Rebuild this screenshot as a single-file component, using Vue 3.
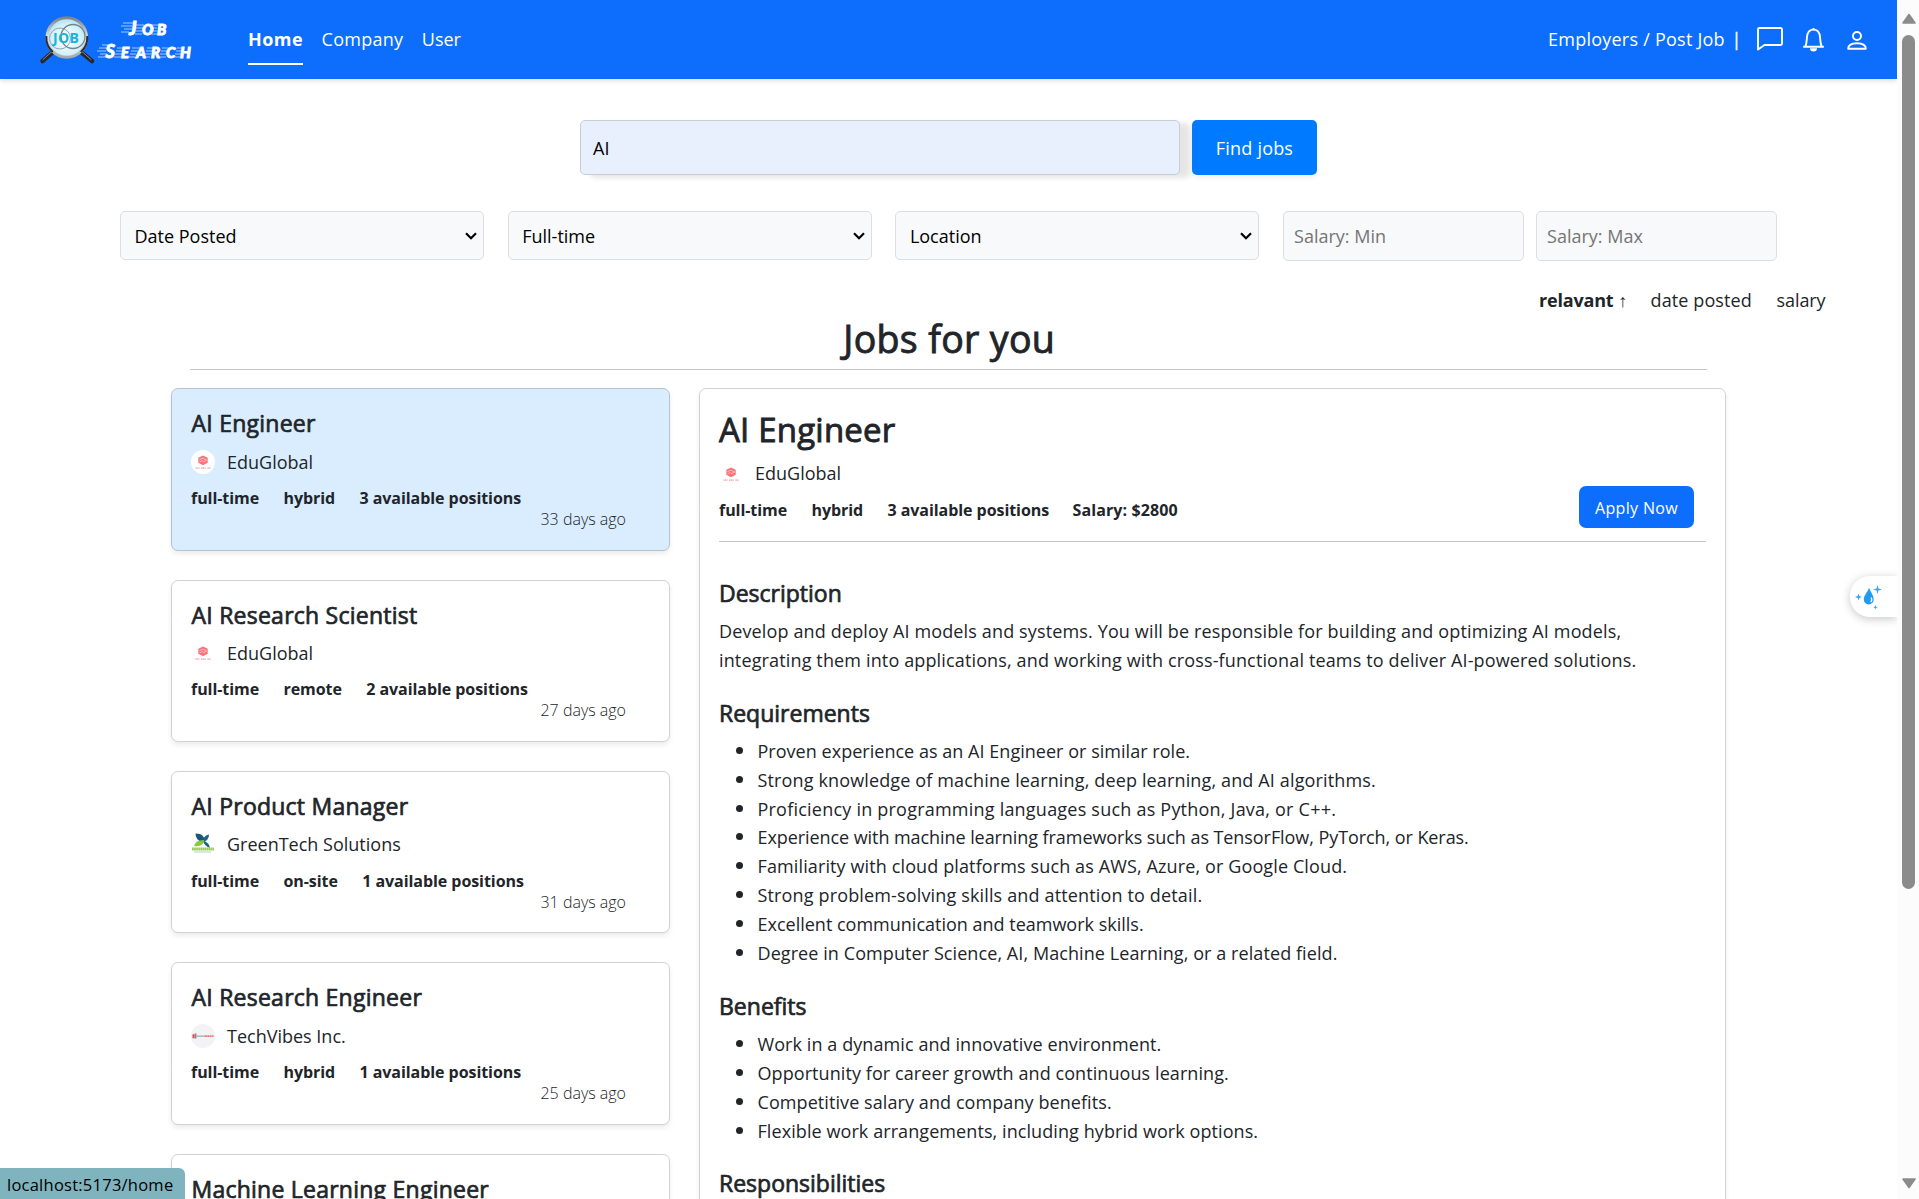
<script setup>
const jobs = [
  { title: 'AI Engineer', company: 'EduGlobal', logo: 'edu', mode: 'hybrid', open: 3, days: 33, active: true },
  { title: 'AI Research Scientist', company: 'EduGlobal', logo: 'edu', mode: 'remote', open: 2, days: 27 },
  { title: 'AI Product Manager', company: 'GreenTech Solutions', logo: 'green', mode: 'on-site', open: 1, days: 31 },
  { title: 'AI Research Engineer', company: 'TechVibes Inc.', logo: 'vibes', mode: 'hybrid', open: 1, days: 25 },
  { title: 'Machine Learning Engineer' },
]
const filters = ['Date Posted', 'Full-time', 'Location']
const requirements = [
  'Proven experience as an AI Engineer or similar role.',
  'Strong knowledge of machine learning, deep learning, and AI algorithms.',
  'Proficiency in programming languages such as Python, Java, or C++.',
  'Experience with machine learning frameworks such as TensorFlow, PyTorch, or Keras.',
  'Familiarity with cloud platforms such as AWS, Azure, or Google Cloud.',
  'Strong problem-solving skills and attention to detail.',
  'Excellent communication and teamwork skills.',
  'Degree in Computer Science, AI, Machine Learning, or a related field.',
]
const benefits = [
  'Work in a dynamic and innovative environment.',
  'Opportunity for career growth and continuous learning.',
  'Competitive salary and company benefits.',
  'Flexible work arrangements, including hybrid work options.',
]
</script>

<template>
  <div class="window">
    <div class="page">
      <header class="navbar">
        <svg class="brand" width="156" height="52" viewBox="38 14 156 52">
          <defs>
            <radialGradient id="glass" cx="50%" cy="55%" r="55%">
              <stop offset="0" stop-color="#ffffff" />
              <stop offset=".7" stop-color="#d3f1fa" />
              <stop offset="1" stop-color="#a9dcef" />
            </radialGradient>
            <linearGradient id="rim" x1="0" y1="0" x2="0" y2="1">
              <stop offset="0" stop-color="#7d8388" />
              <stop offset=".5" stop-color="#dfe3e5" />
              <stop offset="1" stop-color="#a5aaae" />
            </linearGradient>
          </defs>
          <g stroke-linecap="round">
            <path d="M53 52 42.500 61" stroke="#26282c" stroke-width="4.500" />
            <path d="M81 52 92 61" stroke="#26282c" stroke-width="4.500" />
            <path d="M52 51.500 43 59.500" stroke="#85898e" stroke-width="1" />
            <path d="M82 51.500 91 59.500" stroke="#85898e" stroke-width="1" />
          </g>
          <circle cx="66.800" cy="37.500" r="19.800" fill="url(#glass)" stroke="url(#rim)" stroke-width="3" />
          <circle cx="60" cy="38.500" r="10.500" fill="none" stroke="#8fa9b3" stroke-width="1" />
          <circle cx="73" cy="36.500" r="12" fill="none" stroke="#70868f" stroke-width="1.300" />
          <path d="M46.300 36q-.5 10 6.500 16M87.300 36q.5 10-6.500 16" fill="none" stroke="#2b2d31" stroke-width="2" />
          <text class="glass-word" x="53" y="43" textLength="26">JOB</text>
          <g stroke="#ffffff" stroke-width=".9" opacity=".7">
            <path d="M123 23h10M121 26h11M124 29h8M121 32h8M136 25h8M135 28h8M136 31h6M135 34h7M151 25h8M150 28h7M149 31h8M150 34h7" />
            <path d="M102 45h8M99 48h10M97 51h9M100 54h7M98 57h8M117 48h7M116 51h7M115 54h7M114 57h7M132 48h8M131 51h7M130 54h6M129 57h6M147 48h7M146 51h7M145 54h6M144 57h6M162 48h7M161 51h6M160 54h6M159 57h7M177 48h7M176 51h6M175 54h6M174 57h6" />
          </g>
          <text class="speed big" x="129" y="34.800">J</text>
          <text class="speed" x="142 157" y="34.800">OB</text>
          <text class="speed big" x="105.500" y="57.500">S</text>
          <text class="speed" x="121 136 151 166 180" y="57.500">EARCH</text>
        </svg>
        <nav class="links">
          <a class="current">Home</a>
          <a class="l-company">Company</a>
          <a class="l-user">User</a>
        </nav>
        <div class="account">
          <span class="employers">Employers / Post Job</span>
          <span class="bar">|</span>
          <svg class="i-chat" width="26" height="24" viewBox="0 0 26 24"><path d="M2.500 1h21a1.500 1.500 0 0 1 1.500 1.500v14a1.500 1.500 0 0 1-1.500 1.500H7.500L1 22.500V2.500A1.500 1.500 0 0 1 2.500 1z" fill="none" stroke="#fff" stroke-width="1.900" stroke-linejoin="round" /></svg>
          <svg class="i-bell" width="23" height="25" viewBox="0 0 23 25"><path d="M1.200 19.700h20.600M3.300 19.500C5 16.500 4.600 9.500 5.500 7.200 6.500 4 8.500 2.600 11.500 2.600s5 1.400 6 4.600c.9 2.300.5 9.300 2.200 12.300" fill="none" stroke="#fff" stroke-width="1.900" stroke-linejoin="round" /><path d="M10 2.500a1.500 1.500 0 0 1 3 0z M8 21.200h7a3.500 3.200 0 0 1-7 0z" fill="#fff" /></svg>
          <svg class="i-user" width="20" height="19" viewBox="0 0 20 19"><circle cx="10" cy="5" r="4" fill="none" stroke="#fff" stroke-width="1.900" /><path d="M1.200 17.800c0-3.500 3.500-5.600 8.800-5.600s8.800 2.100 8.800 5.600z" fill="none" stroke="#fff" stroke-width="1.900" stroke-linejoin="round" /></svg>
        </div>
      </header>

      <form class="search">
        <div class="query">AI</div>
        <div class="find"><span>Find jobs</span></div>
      </form>

      <div class="filters">
        <div v-for="f in filters" :key="f" class="select">
          <span>{{ f }}</span>
          <svg width="12" height="8" viewBox="0 0 12 8"><path d="M1 1.200 6 6.200 11 1.200" fill="none" stroke="#000" stroke-width="2.200" /></svg>
        </div>
        <div class="salary"><span>Salary: Min</span></div>
        <div class="salary second"><span>Salary: Max</span></div>
      </div>

      <div class="sort">
        <span class="s1"><b>relavant</b> <i>↑</i></span>
        <span class="s2">date posted</span>
        <span class="s3">salary</span>
      </div>

      <h1><span>Jobs for you</span></h1>

      <main class="columns">
        <section class="list">
          <article v-for="job in jobs" :key="job.title" class="card" :class="{ active: job.active }">
            <h5>{{ job.title }}</h5>
            <template v-if="job.company">
              <div class="company">
                <svg v-if="job.logo === 'edu'" class="avatar" viewBox="0 0 24 24"><circle cx="12" cy="12" r="12" fill="#fff" /><path d="m12 5.500 4.700 2.300v5L12 15.200l-4.700-2.400v-5z" fill="#f9747a" /><path d="m8.500 9.500 3.500-1.300 3.500 1.700M8.500 11.800l3-1.200 1 1 3-1.400" fill="none" stroke="#fff" stroke-width=".5" /><path d="M4.500 18.200h4M10 18.200h5M16.500 18.200h3" stroke="#fbb6b8" stroke-width="1.800" stroke-dasharray="1.300 .4" /></svg>
                <svg v-else-if="job.logo === 'green'" class="avatar" viewBox="0 0 24 24"><path d="M4.500.5c6.500 0 9.500 3.500 9 8-5.500.5-8.500-2-9-8z" fill="#17587a" /><path d="M11.500 8.500q1-6 6.500-7 0 6.500-6.500 7zM12 7.500q6.500 2 7 7.500-6-2-7-7.500z" fill="#1d6584" /><path d="M3 13q1.500-6 10-6 0 7-10 6z" fill="#8ac63f" /><path d="M1 16h22" stroke="#9bcb58" stroke-width="3" stroke-dasharray="1.800 .3" /><path d="M3 19h17" stroke="#b9cdd4" stroke-width="1" /></svg>
                <svg v-else class="avatar" viewBox="0 0 24 24"><circle cx="12" cy="12" r="12" fill="#f3f2f4" /><path d="M1.500 10.300h2v4h-2z" fill="#ee4048" /><path d="M3.500 9.500h2v5h-2z" fill="#8a8a8c" /><path d="M6 12.200h8" stroke="#b7b7ba" stroke-width="1.600" /><path d="M14 12.200h8.500" stroke="#f0777c" stroke-width="1.700" stroke-dasharray="2 .3" /></svg>
                <span>{{ job.company }}</span>
              </div>
              <div class="tags"><span>full-time</span><span>{{ job.mode }}</span><span>{{ job.open }} available positions</span></div>
              <div class="age">{{ job.days }} days ago</div>
            </template>
          </article>
        </section>

        <section class="detail">
          <div class="head">
            <div>
              <h3><span>AI Engineer</span></h3>
              <div class="company">
                <svg class="avatar" viewBox="0 0 24 24"><path d="m12 5.500 4.700 2.300v5L12 15.200l-4.700-2.400v-5z" fill="#f9747a" /><path d="m8.500 9.500 3.500-1.300 3.500 1.700M8.500 11.800l3-1.200 1 1 3-1.400" fill="none" stroke="#fff" stroke-width=".5" /><path d="M4.500 18.200h4M10 18.200h5M16.500 18.200h3" stroke="#fbb6b8" stroke-width="1.800" stroke-dasharray="1.300 .4" /></svg>
                <span>EduGlobal</span>
              </div>
              <div class="tags"><span>full-time</span><span>hybrid</span><span>3 available positions</span><span class="pay">Salary: $2800</span></div>
            </div>
            <div class="apply"><span>Apply Now</span></div>
          </div>
          <h5 class="first">Description</h5>
          <p><span>Develop and deploy AI models and systems. You will be responsible for building and optimizing AI models,</span><br><span>integrating them into applications, and working with cross-functional teams to deliver AI-powered solutions.</span></p>
          <h5>Requirements</h5>
          <ul class="requirements"><li v-for="r in requirements" :key="r"><span>{{ r }}</span></li></ul>
          <h5>Benefits</h5>
          <ul class="benefits"><li v-for="b in benefits" :key="b"><span>{{ b }}</span></li></ul>
          <h5>Responsibilities</h5>
        </section>
      </main>

      <div class="widget">
        <svg width="34" height="30" viewBox="0 0 34 30"><path d="M14 6.500c1 4 4.700 7.500 4.700 12a4.900 4.900 0 0 1-9.900 0C8.800 14 13 11 14 6.500z" fill="#1f9cf0" /><path d="M16.200 16.500q1.300 3-.5 4.500" stroke="#fff" stroke-width="1.300" fill="none" /><path d="m22.500 4 1 3.500L27 8.500l-3.500 1-1 3.500-1-3.500-3.500-1 3.500-1zM3.500 12.500l.9 2.600 2.600.9-2.600.9-.9 2.600-.9-2.600L0 16l2.600-.9zM20.500 24l.6 1.700 1.700.6-1.700.6-.6 1.700-.6-1.700-1.700-.6 1.700-.6z" fill="#3aa8ee" /></svg>
      </div>
      <div class="status"><span>localhost:5173/home</span></div>
    </div>
    <div class="scrollbar">
      <svg width="14" height="11" viewBox="0 0 14 11"><path d="M7 1.500 13 10H1z" fill="#8b8b8b" stroke="#8b8b8b" stroke-width="1.600" stroke-linejoin="round" /></svg>
      <div class="thumb"></div>
      <svg class="down" width="14" height="11" viewBox="0 0 14 11"><path d="M7 9.500 13 1H1z" fill="#8b8b8b" stroke="#8b8b8b" stroke-width="1.600" stroke-linejoin="round" /></svg>
    </div>
  </div>
</template>

<style>
html, body { margin: 0; overflow: hidden; background: #fff; }
</style>

<style scoped>
* { box-sizing: border-box; }
.window {
  display: flex;
  width: 1919px;
  height: 1199px;
  overflow: hidden;
  font-family: "Open Sans", "Noto Sans", sans-serif;
  font-size: 18px;
  line-height: 28.8px;
  color: #212529;
  white-space: nowrap;
}
.page { position: relative; width: 1897px; height: 1199px; overflow: hidden; }
.navbar { display: flex; height: 79px; background: #0d6efd; color: #fff; box-shadow: 0 2px 5px rgba(0, 0, 0, .12); }
.brand { margin: 14px 0 0 38px; flex: none; }
.glass-word { font: bold 14px "Open Sans", sans-serif; fill: #18b4d8; }
.speed { font: italic 900 15px Lato, sans-serif; fill: #fff; stroke: #fff; stroke-width: .9px; }
.speed.big { font-size: 18px; }
.links { display: flex; gap: 18.500px; margin: 25px 0 0 54px; height: 40px; }
.links a { height: 40px; }
.links .current { font-weight: 700; letter-spacing: .45px; border-bottom: 2px solid #fff; }
.l-company { letter-spacing: .26px; }
.account { display: flex; margin-left: auto; padding-top: 25px; width: 349px; }
.employers { letter-spacing: .24px; }
.bar { margin-left: 6.500px; -webkit-text-stroke: .3px #fff; }
.account svg { flex: none; }
.i-chat { margin: 2px 0 0 15.500px; }
.i-bell { margin: 2px 0 0 19px; }
.i-user { margin: 5.500px 0 0 22px; }
.search { display: flex; justify-content: center; gap: 12px; padding-top: 41px; }
.query {
  width: 600px;
  height: 55px;
  padding: 13px 12px;
  background: #e8f0fe;
  border: 1px solid #c9ccd0;
  border-radius: 5px;
  box-shadow: 10px 3px 5px rgba(0, 0, 0, .1);
  color: #000;
}
.find { width: 125px; height: 55px; padding: 14px 0; border-radius: 5px; background: #007bff; color: #fff; text-align: center; letter-spacing: .2px; box-shadow: 0 3px 5px rgba(0, 0, 0, .06); z-index: 1; }
.filters { display: flex; padding: 36px 0 0 120px; height: 86px; }
.select, .salary { border: 1px solid #dcdee1; border-radius: 5px; background: #f8f9fa; }
.select { display: flex; justify-content: space-between; width: 364px; height: 49px; margin-right: 23.700px; padding: 10px 6px 0 13.500px; color: #000; }
.select svg { margin-top: 10px; }
.salary { width: 241px; height: 50px; padding: 10px; color: #757575; }
.second { margin-left: 12px; }
.sort { display: flex; justify-content: flex-end; height: 29px; margin-top: 25px; padding: 0 71.500px 0 0; }
.sort b { letter-spacing: -.2px; }
.sort i { font-style: normal; font-family: "Liberation Sans", sans-serif; font-size: 18px; line-height: 1; }
.s1 { width: 111.500px; }
.s2 { width: 126px; letter-spacing: .1px; }
.s3 { letter-spacing: -.1px; }
h1, h3, h5, p, ul { margin: 0; }
h1 { width: 1517px; height: 53px; margin: 2px 0 0 190px; padding-left: 1.500px; border-bottom: 1px solid #c4c6c8; font-size: 37.500px; letter-spacing: .35px; font-weight: 400; -webkit-text-stroke: .9px #212529; line-height: 43px; text-align: center; }
.columns { display: flex; gap: 29px; padding: 18.400px 0 0 171px; }
.list { display: flex; flex-direction: column; gap: 28.800px; width: 499px; }
.card { flex: none; height: 162.500px; padding: 20px 19px; border: 1px solid #d0d2d4; border-radius: 7px; background: #fff; box-shadow: 0 3px 5px rgba(0, 0, 0, .08); }
.active { background: #d9edff; border-color: #b3c4d3; }
h5 { font-size: 23px; font-weight: 400; -webkit-text-stroke: .7px #212529; line-height: 29px; }
.card h5 { letter-spacing: .24px; padding-left: .5px; }
.company { display: flex; gap: 12px; align-items: center; font-size: 18px; }
.avatar { width: 24px; height: 24px; flex: none; }
.card .company { height: 29px; margin-top: 9.200px; }
.tags { display: flex; gap: 24.400px; font-weight: 700; font-size: 16px; line-height: 26px; letter-spacing: -.06px; }
.pay { letter-spacing: .1px; margin-left: -1px; }
.card .tags { margin-top: 8.500px; }
.age { margin: -5px 24px 0 0; text-align: right; font-size: 16px; font-weight: 300; line-height: 26px; }
.detail { width: 1027px; height: 900px; padding: 19px 19px; border: 1px solid #d0d2d4; border-radius: 7px; box-shadow: 0 3px 5px rgba(0, 0, 0, .08); }
.head { display: flex; justify-content: space-between; height: 134px; border-bottom: 1px solid #c4c6c8; }
h3 { font-size: 33px; letter-spacing: .2px; font-weight: 400; -webkit-text-stroke: .9px #212529; line-height: 44px; }
.head .company { height: 29px; margin-top: 7px; }
.head .tags { margin-top: 9px; }
.apply { width: 115px; height: 42px; margin: 78px 12px 0 0; border-radius: 7px; background: #0d6efd; color: #fff; text-align: center; font-size: 16px; letter-spacing: .35px; line-height: 44px; }
.first { margin-top: 37px; }
.detail p { letter-spacing: .14px; }
.detail h5 + p, .detail h5 + ul { margin: 9px 0 24px; }
ul { list-style: none; padding: 0 0 0 38.500px; letter-spacing: .08px; }
.detail h5 + .requirements { margin-bottom: 25px; }
.detail h5 + .benefits { margin-bottom: 23.500px; }
.requirements li:nth-child(1) { letter-spacing: .03px; }
.requirements li:nth-child(2) { letter-spacing: .14px; }
.requirements li:nth-child(3) { letter-spacing: .22px; }
.requirements li:nth-child(4) { letter-spacing: -.07px; }
.requirements li:nth-child(5) { letter-spacing: .12px; }
.requirements li:nth-child(6) { letter-spacing: .15px; }
.requirements li:nth-child(7) { letter-spacing: 0; }
li { position: relative; }
li::before { content: ""; position: absolute; left: -22px; top: 10px; width: 7px; height: 7px; border-radius: 50%; background: #212529; }
.widget { position: absolute; right: 0; top: 576px; width: 47px; height: 41px; padding: 5px 0 0 5px; border-radius: 20px 0 0 20px; background: #fff; box-shadow: 0 2px 10px rgba(0, 0, 0, .22); }
.status { position: absolute; left: 0; bottom: 0; width: 185px; height: 31px; padding-left: 7px; border-radius: 0 6px 0 0; background: #7fb4be; color: #000; font-size: 16.500px; letter-spacing: .24px; line-height: 33px; }
.scrollbar { display: flex; flex-direction: column; width: 22px; padding: 13px 0 0 5px; background: #fcfcfc; }
.thumb { width: 13px; height: 854px; margin-top: 11px; border-radius: 7px; background: #8b8b8b; }
.down { margin-top: 289px; }
</style>
